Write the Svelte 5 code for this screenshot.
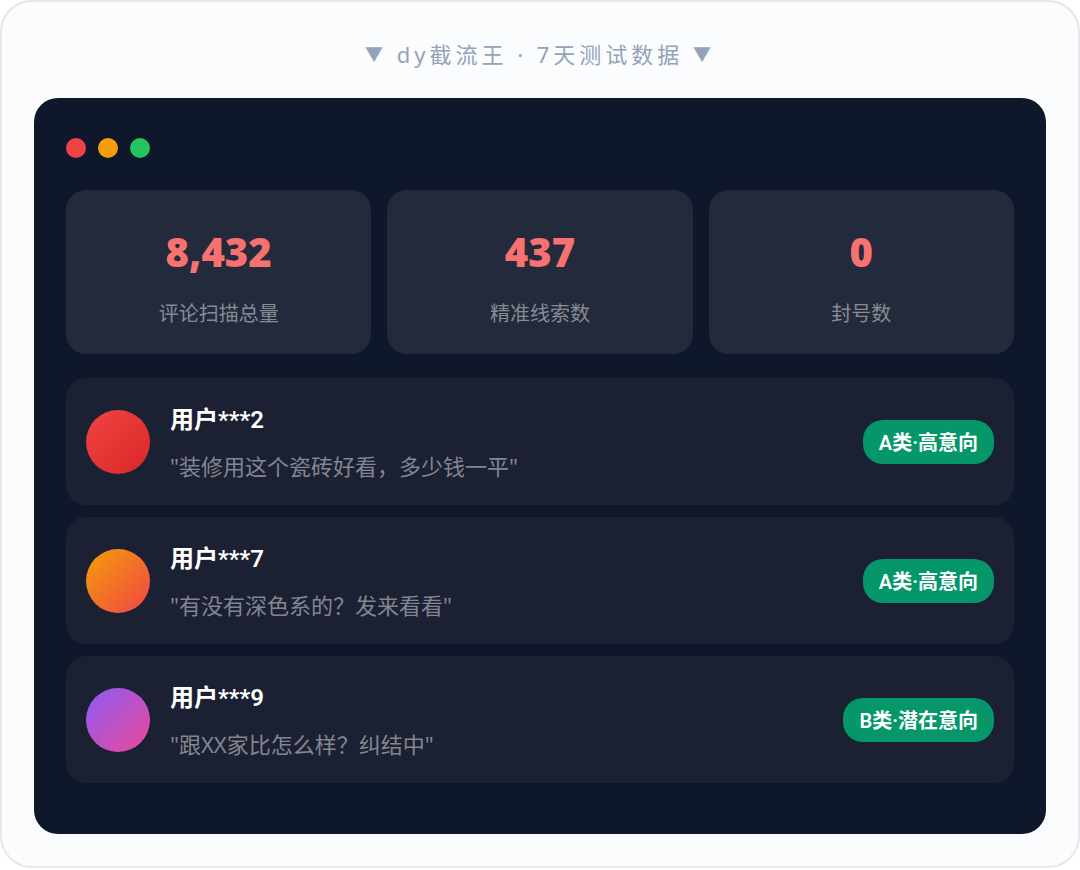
<script lang="ts">
  interface Lead {
    name: string;
    comment: string;
    grade: string;
    tone: "red" | "amber" | "violet";
  }

  const stats = [
    { value: "8,432", label: "评论扫描总量" },
    { value: "437", label: "精准线索数" },
    { value: "0", label: "封号数" },
  ];

  const leads: Lead[] = [
    { name: "用户***2", comment: "装修用这个瓷砖好看，多少钱一平", grade: "A类·高意向", tone: "red" },
    { name: "用户***7", comment: "有没有深色系的？发来看看", grade: "A类·高意向", tone: "amber" },
    { name: "用户***9", comment: "跟XX家比怎么样？纠结中", grade: "B类·潜在意向", tone: "violet" },
  ];
</script>

<section class="showcase">
  <h2 class="showcase__title">
    <span class="showcase__arrow">▼</span> dy截流王 · 7天测试数据 <span class="showcase__arrow">▼</span>
  </h2>

  <div class="panel">
    <div class="panel__dots" aria-hidden="true">
      <span class="dot dot--red"></span>
      <span class="dot dot--amber"></span>
      <span class="dot dot--green"></span>
    </div>

    <div class="stats">
      {#each stats as stat}
        <div class="stat">
          <div class="stat__value">{stat.value}</div>
          <div class="stat__label">{stat.label}</div>
        </div>
      {/each}
    </div>

    <ul class="leads">
      {#each leads as lead}
        <li class="lead">
          <span class="lead__avatar lead__avatar--{lead.tone}"></span>
          <div class="lead__body">
            <div class="lead__name">{lead.name}</div>
            <div class="lead__comment">"{lead.comment}"</div>
          </div>
          <span class="lead__badge">{lead.grade}</span>
        </li>
      {/each}
    </ul>
  </div>
</section>

<style>
  :global(body) {
    margin: 0;
    background: #fff;
    font-family: "Noto Sans", "Noto Sans CJK SC", sans-serif;
  }

  .showcase {
    box-sizing: border-box;
    padding: 32px;
    border: 2px solid #e5e7eb;
    border-radius: 32px;
    background: #fafcfe;
  }

  .showcase__title {
    margin: 0 0 24px;
    font-size: 22px;
    font-weight: 400;
    line-height: 40px;
    letter-spacing: 4px;
    text-align: center;
    color: #94a3b8;
  }

  .showcase__arrow {
    font-size: 18px;
    line-height: 1;
    vertical-align: 2px;
  }

  .panel {
    padding: 40px 32px 39px;
    border-radius: 24px;
    background: #0f172a;
  }

  .panel__dots {
    display: flex;
    gap: 12px;
    margin-bottom: 32px;
  }

  .dot {
    width: 20px;
    height: 20px;
    border-radius: 50%;
  }

  .dot--red {
    background: #ef4444;
  }

  .dot--amber {
    background: #f59e0b;
  }

  .dot--green {
    background: #22c55e;
  }

  .stats {
    display: grid;
    grid-template-columns: repeat(3, 1fr);
    gap: 16px;
    margin-bottom: 24px;
  }

  .stat {
    padding: 28px 16px 22px;
    border-radius: 20px;
    background: #232a3b;
    text-align: center;
  }

  .stat__value {
    margin-bottom: 10px;
    font-size: 40px;
    font-weight: 900;
    line-height: 68px;
    color: #f87171;
  }

  .stat__label {
    font-size: 20px;
    line-height: 36px;
    color: #878b94;
  }

  .leads {
    margin: 0;
    padding: 0;
    list-style: none;
  }

  .lead {
    display: flex;
    align-items: center;
    gap: 20px;
    margin-bottom: 12px;
    padding: 20px;
    border-radius: 20px;
    background: #1b2133;
  }

  .lead__avatar {
    flex-shrink: 0;
    width: 64px;
    height: 64px;
    border-radius: 50%;
  }

  .lead__avatar--red {
    background: linear-gradient(135deg, #ef4444, #dc2626);
  }

  .lead__avatar--amber {
    background: linear-gradient(135deg, #f59e0b, #ef4444);
  }

  .lead__avatar--violet {
    background: linear-gradient(135deg, #8b5cf6, #ec4899);
  }

  .lead__body {
    flex: 1;
    min-width: 0;
  }

  .lead__name {
    margin-bottom: 5px;
    font-family: Roboto, "Noto Sans CJK SC", sans-serif;
    font-size: 24px;
    font-weight: 600;
    line-height: 44px;
    color: #fff;
  }

  .lead__comment {
    font-size: 22px;
    line-height: 38px;
    color: #83868f;
  }

  .lead__badge {
    flex-shrink: 0;
    padding: 5px 16px 3px;
    border-radius: 20px;
    background: #059669;
    font-family: Roboto, "Noto Sans CJK SC", sans-serif;
    font-size: 20px;
    font-weight: 600;
    line-height: 36px;
    color: #fff;
  }
</style>
